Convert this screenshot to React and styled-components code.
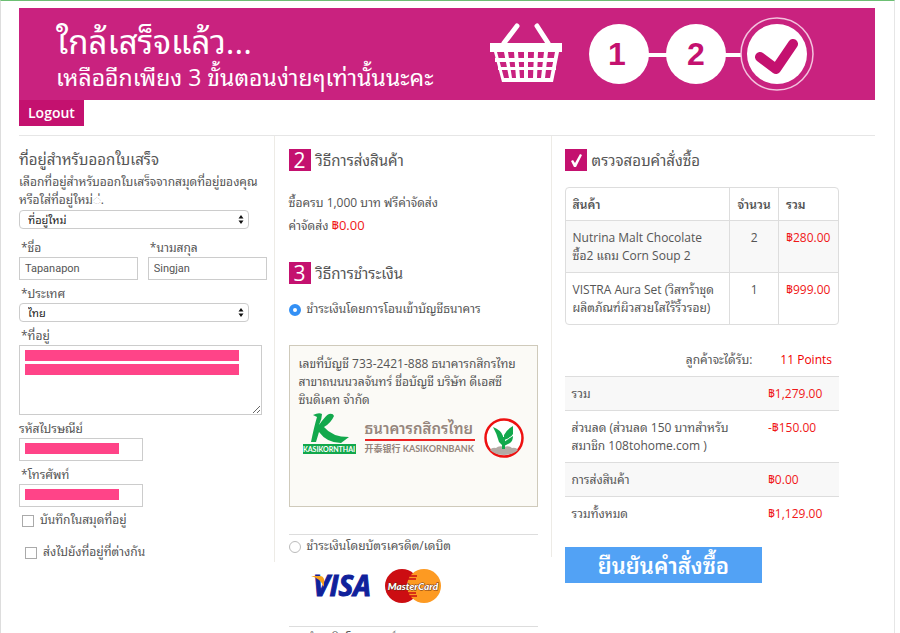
import React, { useState } from "react";
import styled, { createGlobalStyle } from "styled-components";

const GlobalStyle = createGlobalStyle`
  * {
    box-sizing: border-box;
  }
  html {
    scrollbar-width: none;
  }
  body {
    margin: 0;
    background: #fff;
    color: #555;
    font-family: "Open Sans", "Noto Sans Thai Looped", "Loma", "Noto Sans Thai", sans-serif;
    font-size: 12px;
    line-height: 18px;
  }
  h1, h2, p, dl, dd, dt {
    margin: 0;
    font-weight: normal;
  }
`;

const Page = styled.main`
  margin-right: 5px;
  padding: 7px 19px 0 18px;
  min-height: 100vh;
  border-top: 1px solid #6cbf73;
  border-left: 1px solid #ddd;
  border-right: 1px solid #e6e6e6;
`;

const Banner = styled.header`
  display: flex;
  justify-content: space-between;
  align-items: center;
  height: 92px;
  padding: 0 61px 0 37px;
  background: #c9227f;
  color: #fff;
`;

const BannerCopy = styled.div`
  padding-top: 8px;
`;

const BannerTitle = styled.h1`
  font-size: 33px;
  line-height: 38px;
`;

const BannerText = styled.p`
  font-size: 23px;
  line-height: 32px;
`;

const LogoutLink = styled.a`
  display: inline-block;
  padding: 0 9px;
  background: #c4116f;
  color: #fff;
  font-size: 14px;
  font-weight: 600;
  line-height: 26px;
  text-decoration: none;
`;

const Columns = styled.div`
  display: grid;
  grid-template-columns: 26fr 28fr 33fr;
  align-items: start;
  margin-top: 9px;
  border-top: 1px solid #e6e6e6;
`;

const Billing = styled.section`
  padding: 11px 7px 0 0;
  border-right: 1px solid #edebe6;
`;

const Methods = styled.section`
  padding: 13px 13px 0 14px;
`;

const Review = styled.section`
  padding: 13px 36px 0 14px;
  background: linear-gradient(#edebe6, #edebe6) no-repeat 0 0 / 1px calc(100% - 26px);
`;

const Heading = styled.h2`
  font-size: 15px;
  line-height: 24px;
`;

const StepHeading = styled.h2`
  display: flex;
  align-items: center;
  gap: 5px;
  height: 22px;
  margin-bottom: ${(props) => props.$space}px;
  font-size: 15px;
`;

const Badge = styled.span`
  display: flex;
  align-items: center;
  justify-content: center;
  width: 22px;
  height: 22px;
  background: #c4116f;
  color: #fff;
  font-size: 21px;
`;

const Intro = styled.p`
  margin: 2px 0 1px;
`;

const Field = styled.div`
  display: flex;
  flex-direction: column;
  align-items: flex-start;
  margin-top: 5px;
`;

const FieldRow = styled.div`
  display: grid;
  grid-template-columns: 1fr 1fr;
  gap: 10px;
  margin-top: 10px;

  ${Field} {
    margin-top: 0;
  }
`;

const Label = styled.label`
  padding-left: ${(props) => (props.$required ? 2 : 0)}px;
`;

const Control = styled.div`
  position: relative;
  width: ${(props) => props.$width || "100%"};
`;

const TextInput = styled.input`
  display: block;
  width: 100%;
  height: 23px;
  padding: 0 5px;
  border: 1px solid #ccc;
  background: #fff;
  color: #555;
  font-family: Roboto, sans-serif;
  font-size: 11px;
`;

const TextArea = styled.textarea`
  display: block;
  width: 100%;
  height: 70px;
  border: 1px solid #ccc;
  resize: vertical;
`;

const Select = styled.select`
  display: block;
  width: 100%;
  height: 19px;
  padding: 0 8px;
  appearance: none;
  border: 1px solid #ccc;
  border-radius: 4px;
  background: #fff;
  color: #222;
  font-family: inherit;
  font-size: 11px;
  line-height: 17px;
`;

const Arrows = styled.svg`
  position: absolute;
  right: 5px;
  top: 5px;
  pointer-events: none;
`;

const Masks = styled.div`
  position: absolute;
  top: 5px;
  left: 6px;
  display: grid;
  gap: 3px;
  width: ${(props) => props.$width};
  pointer-events: none;
`;

const Mask = styled.span`
  height: 11px;
  background: #ff4488;
`;

const CheckRow = styled.label`
  display: flex;
  align-items: center;
  gap: 6px;
  margin-top: ${(props) => props.$space}px;
  padding-left: ${(props) => props.$indent}px;
  line-height: 20px;
`;

const Checkbox = styled.input`
  width: 12px;
  height: 12px;
  margin: 2px 0 0;
  appearance: none;
  border: 1px solid #aaa;
  background: #fff;

  &:checked {
    background: #3390f5;
  }
`;

const Radio = styled.input`
  width: 12px;
  height: 12px;
  margin: 1px 0 0;
  appearance: none;
  border: 1px solid #bbb;
  border-radius: 50%;
  background: #fff;

  &:checked {
    border: 4px solid #3390f5;
  }
`;

const Shipping = styled.p`
  line-height: 22px;
`;

const Price = styled.span`
  color: #f01818;
  font-size: ${(props) => (props.$large ? 13 : 12)}px;
`;

const ShippingBox = styled.div`
  margin-bottom: 25px;
`;

const BankBox = styled.div`
  min-height: 162px;
  margin: 26px 0 27px;
  padding: 9px;
  border: 1px solid #cfcabb;
  background: #fbfaf6;
`;

const BankLogos = styled.div`
  display: flex;
  align-items: flex-start;
  gap: 9px;
  padding: 4px 4px 0;
`;

const BankName = styled.div`
  width: 110px;
  margin-top: 6px;
  color: #95857c;
  white-space: nowrap;
`;

const BankNameThai = styled.div`
  height: 22px;
  border-bottom: 2px solid #ee2222;
  font-size: 15px;
  font-weight: 600;
`;

const BankNameLatin = styled.div`
  font-family: Lato, "Noto Sans CJK SC", sans-serif;
  font-size: 9px;
  font-weight: 700;
  line-height: 15px;
`;

const PaymentOption = styled.div`
  border-top: 1px solid #ddd;

  ${CheckRow} {
    margin-top: 1px;
  }
`;

const CardLogos = styled.div`
  display: flex;
  align-items: flex-end;
  gap: 10px;
  padding: 8px 0 22px 22px;
`;

const ItemTable = styled.table`
  width: 100%;
  border: 1px solid #ddd;
  border-radius: 4px;
  border-spacing: 0;
  table-layout: fixed;

  th,
  td {
    padding: 8px 7px 7px;
    text-align: left;
    vertical-align: top;
    line-height: 18px;
  }
  th {
    padding-bottom: 6px;
    font-weight: 600;
  }
  td {
    border-top: 1px solid #ddd;
  }
  th + th,
  td + td {
    border-left: 1px solid #ddd;
  }
  th:nth-child(2),
  td:nth-child(2) {
    width: 18%;
    text-align: center;
  }
  th:nth-child(3) {
    width: 22%;
  }
  tbody tr:nth-child(odd) {
    background: #f8f8f8;
  }
`;

const Points = styled.p`
  display: flex;
  justify-content: flex-end;
  gap: 28px;
  margin: 26px 7px 7px 0;

  strong {
    color: #f00000;
    font-weight: 500;
  }
`;

const TotalRow = styled.div`
  display: grid;
  grid-template-columns: 1fr 71px;
  gap: 29px;
  padding: 8px 0 7px 7px;
  border-top: 1px solid #ddd;
  background: ${(props) => (props.$shaded ? "#f8f8f8" : "#fff")};
`;

const ConfirmButton = styled.button`
  width: 72%;
  height: 36px;
  margin-top: 17px;
  padding: 0;
  border: 0;
  background: #52a2f5;
  color: #fff;
  font-family: inherit;
  font-size: 22px;
  font-weight: 600;
  line-height: 36px;
  cursor: pointer;
`;

function Progress() {
  return (
    <svg width="324" height="92" viewBox="0 0 324 92" fill="#fff" aria-label="ขั้นตอน">
      <path d="M14 35 L27 18 M58 35 L47 18" stroke="#fff" strokeWidth="5" strokeLinecap="round" />
      <path d="M0 35h72v9h-3L63 74H12L4 44H0z" />
      <path
        d="M7 44h7l5 26h-5zM18 44h6l2 26h-4zM28 44h6v26h-4zM38 44h6l-1 26h-5zM48 44h6l-3 26h-4zM58 44h7l-5 26h-5z"
        fill="#c9227f"
      />
      <path d="M5 50h62v4H5zM8 59h58v3H8z" />
      <path d="M150 45h105v4H150z" />
      <circle cx="129" cy="46" r="30" />
      <circle cx="206" cy="46" r="30" />
      <circle cx="287" cy="46" r="36" fill="#c9227f" stroke="#f3c3de" strokeWidth="1.500" />
      <circle cx="287" cy="46" r="30" />
      <path d="M270 49l16 12 17-25" fill="none" stroke="#c4116f" strokeWidth="10" strokeLinecap="round" strokeLinejoin="round" />
      <g fill="#c4116f" fontFamily="Liberation Sans, sans-serif" fontSize="32" fontWeight="700" textAnchor="middle">
        <text x="127" y="57">1</text>
        <text x="206" y="57">2</text>
      </g>
    </svg>
  );
}

function KasikornThaiLogo() {
  return (
    <svg width="53" height="41" viewBox="0 0 53 41">
      <path
        d="M10 2q6-3 9-1 0 5-3 11Q23 2 26 1q4-1 5 2-3 7-10 11 8 10 25 10l-8 6q-14 0-22-11l-3 10H8Q11 14 14 4z"
        fill="#12a84c"
      />
      <path d="M0 31h53v10H0z" fill="#12a84c" />
      <text x="26" y="39" fill="#fff" textAnchor="middle" fontFamily="Lato, sans-serif" fontSize="7" fontWeight="700">
        KASIKORNTHAI
      </text>
    </svg>
  );
}

function KbankLogo() {
  return (
    <svg width="40" height="50" viewBox="0 0 40 50">
      <circle cx="20" cy="25" r="18.500" fill="#fff" stroke="#ee1111" strokeWidth="2.500" />
      <path d="M6 37q2-3 6-2 3-3 8-1 5-2 8 1 4-1 6 2-5 5-14 5T6 37z" fill="#b3aaa5" />
      <path d="M9 14q8 3 10 9v12q-1-4-4-6-2-8-6-15z" fill="#12a84c" />
      <path d="M29 13v8q-1 3-9 6v-5q2-5 9-9zM29 23q0 5-3 7l-6 3v-4z" fill="#12a84c" />
      <path d="M18 24h3v12h-3z" fill="#12a84c" />
    </svg>
  );
}

function VisaLogo() {
  return (
    <svg width="64" height="40" viewBox="0 -4 64 40">
      <text
        x="2"
        y="28"
        fill="#10219b"
        stroke="#10219b"
        strokeWidth="1"
        fontFamily="Open Sans, sans-serif"
        fontSize="28"
        fontWeight="700"
        fontStyle="italic"
      >
        VISA
      </text>
      <path d="M0 8h9q3 0 4 3v8Q9 10 0 8z" fill="#f6a11c" />
    </svg>
  );
}

function MasterCardLogo() {
  return (
    <svg width="58" height="36" viewBox="0 0 58 36">
      <circle cx="17" cy="18" r="17" fill="#cc0d12" />
      <circle cx="39" cy="18" r="17" fill="#fd9a22" />
      <path d="M25 8h7M23 11h8M23 25h8M25 28h7" stroke="#cc0d12" strokeWidth="1.500" />
      <text
        x="28"
        y="22"
        fill="#fff"
        stroke="#6b2a12"
        strokeWidth="1"
        paintOrder="stroke"
        textAnchor="middle"
        fontFamily="Lato, sans-serif"
        fontSize="10"
        fontWeight="900"
        fontStyle="italic"
      >
        MasterCard
      </text>
    </svg>
  );
}

function SelectField({ id, options, ...rest }) {
  return (
    <Control $width="93%">
      <Select id={id} {...rest}>
        {options.map((option) => (
          <option key={option}>{option}</option>
        ))}
      </Select>
      <Arrows width="6" height="9" viewBox="0 0 6 9">
        <path d="M3 0l2.500 3.500h-5zM3 9L.5 5.500h5z" fill="#111" />
      </Arrows>
    </Control>
  );
}

const items = [
  { name: "Nutrina Malt Chocolate ซื้อ2 แถม Corn Soup 2", quantity: 2, total: "฿280.00" },
  { name: "VISTRA Aura Set (วิสทร้าชุดผลิตภัณฑ์ผิวสวยใสไร้ริ้วรอย)", quantity: 1, total: "฿999.00" },
];

const totals = [
  { label: "รวม", value: "฿1,279.00" },
  { label: "ส่วนลด (ส่วนลด 150 บาทสำหรับสมาชิก 108tohome.com )", value: "-฿150.00" },
  { label: "การส่งสินค้า", value: "฿0.00" },
  { label: "รวมทั้งหมด", value: "฿1,129.00" },
];

export default function App() {
  const [payment, setPayment] = useState("transfer");
  const choose = (event) => setPayment(event.target.value);

  return (
    <>
      <GlobalStyle />
      <Page>
        <Banner>
          <BannerCopy>
            <BannerTitle>ใกล้เสร็จแล้ว...</BannerTitle>
            <BannerText>เหลืออีกเพียง 3 ขั้นตอนง่ายๆเท่านั้นนะคะ</BannerText>
          </BannerCopy>
          <Progress />
        </Banner>
        <LogoutLink href="#logout">Logout</LogoutLink>

        <Columns>
          <Billing>
            <Heading>ที่อยู่สำหรับออกใบเสร็จ</Heading>
            <Intro>
              <label htmlFor="address-book">เลือกที่อยู่สำหรับออกใบเสร็จจากสมุดที่อยู่ของคุณ หรือใส่ที่อยู่ใหม่◌่.</label>
            </Intro>
            <SelectField id="address-book" options={["ที่อยู่ใหม่"]} />
            <FieldRow>
              <Field>
                <Label htmlFor="first-name" $required>*ชื่อ</Label>
                <TextInput id="first-name" defaultValue="Tapanapon" />
              </Field>
              <Field>
                <Label htmlFor="last-name" $required>*นามสกุล</Label>
                <TextInput id="last-name" defaultValue="Singjan" />
              </Field>
            </FieldRow>
            <Field>
              <Label htmlFor="country" $required>*ประเทศ</Label>
              <SelectField id="country" options={["ไทย"]} />
            </Field>
            <Field>
              <Label htmlFor="address" $required>*ที่อยู่</Label>
              <Control $width="98%">
                <TextArea id="address" />
                <Masks $width="88%">
                  <Mask />
                  <Mask />
                </Masks>
              </Control>
            </Field>
            <Field>
              <Label htmlFor="postcode">รหัสไปรษณีย์</Label>
              <Control $width="50%">
                <TextInput id="postcode" />
                <Masks $width="76%">
                  <Mask />
                </Masks>
              </Control>
            </Field>
            <Field>
              <Label htmlFor="phone" $required>*โทรศัพท์</Label>
              <Control $width="50%">
                <TextInput id="phone" type="tel" />
                <Masks $width="76%">
                  <Mask />
                </Masks>
              </Control>
            </Field>
            <CheckRow $space={3} $indent={3}>
              <Checkbox type="checkbox" />
              บันทึกในสมุดที่อยู่
            </CheckRow>
            <CheckRow $space={12} $indent={6}>
              <Checkbox type="checkbox" />
              ส่งไปยังที่อยู่ที่ต่างกัน
            </CheckRow>
          </Billing>

          <Methods>
            <StepHeading $space={21}>
              <Badge>2</Badge>
              วิธีการส่งสินค้า
            </StepHeading>
            <ShippingBox>
              <Shipping>ซื้อครบ 1,000 บาท ฟรีค่าจัดส่ง</Shipping>
              <Shipping>
                ค่าจัดส่ง <Price $large>฿0.00</Price>
              </Shipping>
            </ShippingBox>
            <StepHeading $space={15}>
              <Badge>3</Badge>
              วิธีการชำระเงิน
            </StepHeading>
            <CheckRow>
              <Radio type="radio" name="payment" value="transfer" checked={payment === "transfer"} onChange={choose} />
              ชำระเงินโดยการโอนเข้าบัญชีธนาคาร
            </CheckRow>
            <BankBox>
              <p>เลขที่บัญชี 733-2421-888 ธนาคารกสิกรไทย สาขาถนนนวลจันทร์ ชื่อบัญชี บริษัท ดีเอสซี ซินดิเคท จำกัด</p>
              <BankLogos>
                <KasikornThaiLogo />
                <BankName>
                  <BankNameThai>ธนาคารกสิกรไทย</BankNameThai>
                  <BankNameLatin>开泰银行 KASIKORNBANK</BankNameLatin>
                </BankName>
                <KbankLogo />
              </BankLogos>
            </BankBox>
            <PaymentOption>
              <CheckRow>
                <Radio type="radio" name="payment" value="card" checked={payment === "card"} onChange={choose} />
                ชำระเงินโดยบัตรเครดิต/เดบิต
              </CheckRow>
              <CardLogos>
                <VisaLogo />
                <MasterCardLogo />
              </CardLogos>
            </PaymentOption>
            <PaymentOption>
              <CheckRow>
                <Radio type="radio" name="payment" value="points" checked={payment === "points"} onChange={choose} />
                ชำระเงินโดยพอยท์
              </CheckRow>
            </PaymentOption>
          </Methods>

          <Review>
            <StepHeading $space={16}>
              <Badge>
                <svg width="22" height="22" viewBox="0 0 22 22">
                  <path d="M6 12l2-1 2 3 5-9 2 1-6 12H9z" fill="#fff" />
                </svg>
              </Badge>
              ตรวจสอบคำสั่งซื้อ
            </StepHeading>
            <ItemTable>
              <thead>
                <tr>
                  <th>สินค้า</th>
                  <th>จำนวน</th>
                  <th>รวม</th>
                </tr>
              </thead>
              <tbody>
                {items.map((item) => (
                  <tr key={item.name}>
                    <td>{item.name}</td>
                    <td>{item.quantity}</td>
                    <td>
                      <Price>{item.total}</Price>
                    </td>
                  </tr>
                ))}
              </tbody>
            </ItemTable>
            <Points>
              ลูกค้าจะได้รับ: <strong>11 Points</strong>
            </Points>
            <dl>
              {totals.map((row, index) => (
                <TotalRow key={row.label} $shaded={index % 2 === 0}>
                  <dt>{row.label}</dt>
                  <dd>
                    <Price>{row.value}</Price>
                  </dd>
                </TotalRow>
              ))}
            </dl>
            <ConfirmButton type="button">ยืนยันคำสั่งซื้อ</ConfirmButton>
          </Review>
        </Columns>
      </Page>
    </>
  );
}
